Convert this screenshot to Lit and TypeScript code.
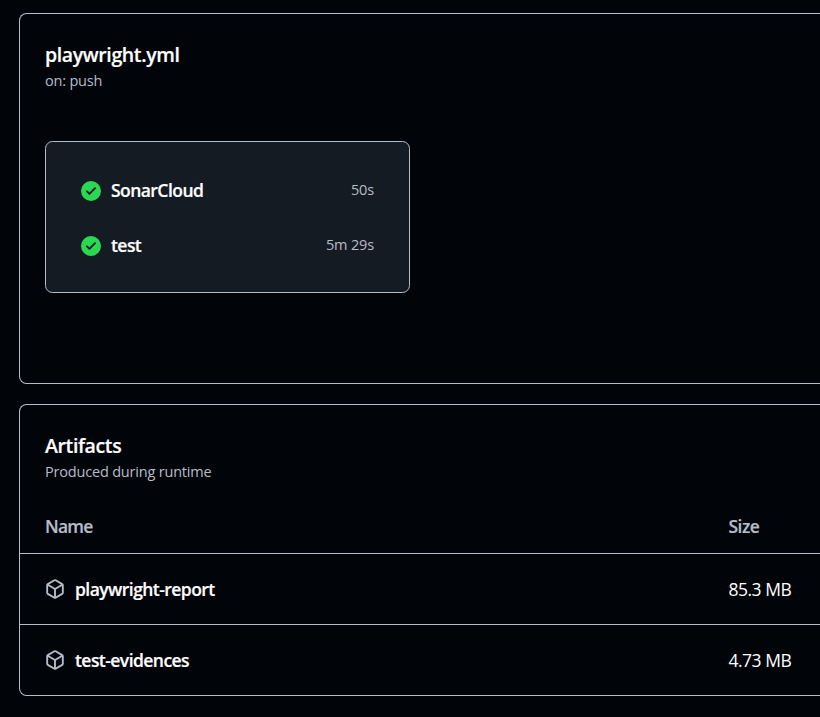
import { LitElement, html, css, svg } from "lit";
import { customElement } from "lit/decorators.js";

const checkIcon = svg`<path d="M8 16A8 8 0 1 1 8 0a8 8 0 0 1 0 16Zm3.78-9.72a.751.751 0 0 0-.018-1.042.751.751 0 0 0-1.042-.018L6.75 9.19 5.28 7.72a.751.751 0 0 0-1.042.018.751.751 0 0 0-.018 1.042l2 2a.75.75 0 0 0 1.06 0Z"/>`;
const packageIcon = svg`<path fill-rule="evenodd" d="M8.878.392a1.75 1.75 0 0 0-1.756 0l-5.25 3.045A1.75 1.75 0 0 0 1 4.951v6.098c0 .624.332 1.2.872 1.514l5.25 3.045a1.75 1.75 0 0 0 1.756 0l5.25-3.045c.54-.313.872-.89.872-1.514V4.951c0-.624-.332-1.2-.872-1.514L8.878.392ZM7.875 1.69a.25.25 0 0 1 .25 0l4.63 2.685L8 7.133 3.245 4.375l4.63-2.685ZM2.5 5.677v5.372c0 .09.047.171.125.216l4.625 2.683V8.432Zm6.25 8.271 4.625-2.683a.25.25 0 0 0 .125-.216V5.677L8.75 8.432Z"/>`;

const jobs = [
  { name: "SonarCloud", time: "50s" },
  { name: "test", time: "5m 29s" },
];
const artifacts = [
  { name: "playwright-report", size: "85.3 MB" },
  { name: "test-evidences", size: "4.73 MB" },
];

@customElement("app-root")
export class AppRoot extends LitElement {
  static styles = css`
    :host {
      display: block;
      box-sizing: border-box;
      height: 717px;
      overflow: hidden;
      padding: 13px 0 0 19px;
      background: #010409;
      color: #fff;
      font-family: "Open Sans", "Noto Sans", sans-serif;
    }
    .panel {
      box-sizing: border-box;
      border: 1px solid #b7bdc8;
      border-right: 0;
      border-radius: 7.5px 0 0 7.5px;
    }
    .workflow { height: 371px; padding: 26px 25px 0; margin-bottom: 20px; }
    .artifacts { height: 292px; padding-top: 26px; }
    .artifacts .title, .artifacts .sub { margin-left: 25px; }
    .title { font-size: 19.5px; line-height: 30px; font-weight: 600; letter-spacing: -0.38px; -webkit-text-stroke: 0.2px; }
    .sub { font-size: 14.5px; line-height: 22px; color: #b7bdc8; letter-spacing: -0.19px; }
    .jobs {
      box-sizing: border-box;
      width: 365px;
      height: 152px;
      margin-top: 49px;
      padding: 21px 35px 0;
      border: 1px solid #b7bdc8;
      border-radius: 7.5px;
      background: #151b23;
    }
    .job { display: flex; align-items: center; height: 55px; }
    .icon { width: 20px; height: 20px; flex: none; margin-right: 10px; }
    .check { fill: #2bd853; }
    .package { fill: #b7bdc8; }
    .name { flex: 1; font-size: 17.5px; line-height: 26px; font-weight: 600; letter-spacing: -0.55px; -webkit-text-stroke: 0.2px; }
    .time { font-size: 14.5px; line-height: 22px; color: #b7bdc8; letter-spacing: -0.15px; }
    .job .name, .job .time, .head .name, .head .size { padding-bottom: 2px; }
    .row {
      box-sizing: border-box;
      display: flex;
      align-items: center;
      height: 71px;
      padding-left: 25px;
      border-top: 1px solid #b7bdc8;
    }
    .head { height: 52px; border-top: 0; color: #b7bdc8; margin-top: 18px; }
    .head .name { letter-spacing: -0.75px; }
    .size { width: 91.5px; font-size: 17.5px; line-height: 26px; letter-spacing: -0.5px; }
    .head .size { font-weight: 600; -webkit-text-stroke: 0.2px; }
  `;

  render() {
    return html`
      <section class="panel workflow">
        <div class="title">playwright.yml</div>
        <div class="sub">on: push</div>
        <div class="jobs">
          ${jobs.map(
            (j) => html`<div class="job">
              <svg class="icon check" viewBox="0 0 16 16">${checkIcon}</svg>
              <span class="name">${j.name}</span><span class="time">${j.time}</span>
            </div>`
          )}
        </div>
      </section>
      <section class="panel artifacts">
        <div class="title">Artifacts</div>
        <div class="sub">Produced during runtime</div>
        <div class="row head"><span class="name">Name</span><span class="size">Size</span></div>
        ${artifacts.map(
          (a) => html`<div class="row">
            <svg class="icon package" viewBox="0 0 16 16">${packageIcon}</svg>
            <span class="name">${a.name}</span><span class="size">${a.size}</span>
          </div>`
        )}
      </section>
    `;
  }
}
